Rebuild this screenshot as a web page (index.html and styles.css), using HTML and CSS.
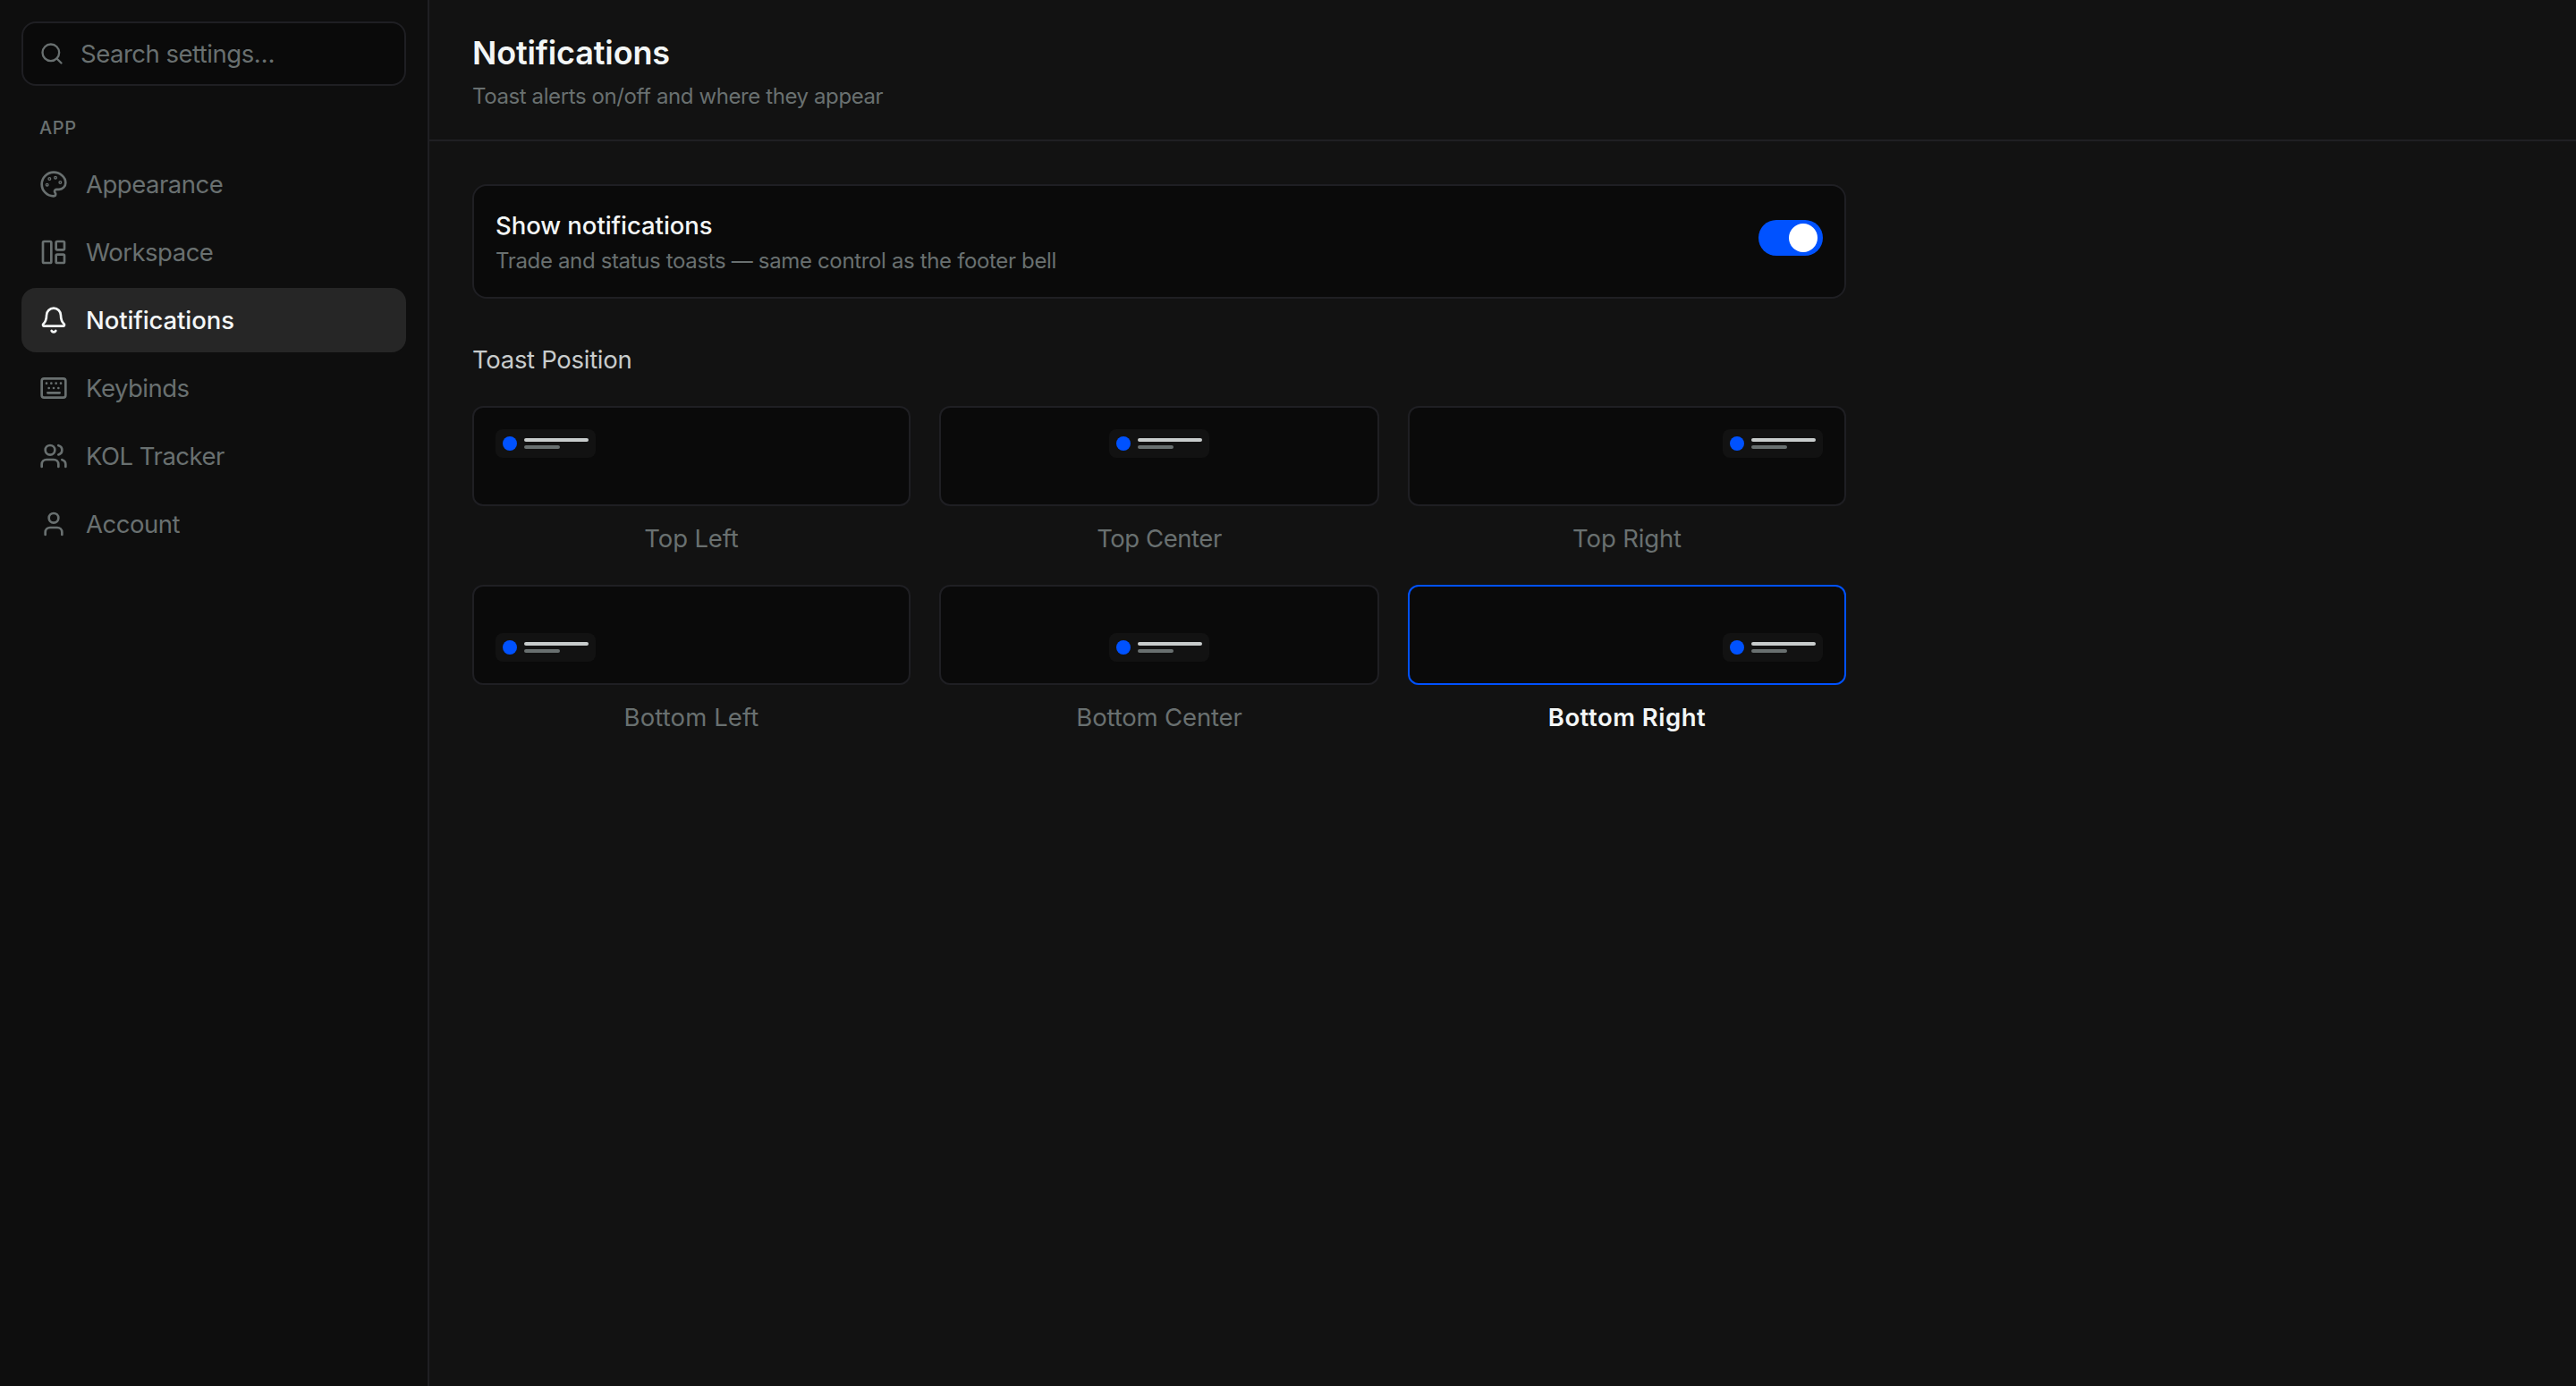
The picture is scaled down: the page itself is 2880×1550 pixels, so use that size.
FILE: index.html
```html
<!DOCTYPE html>
<html lang="en">
<head>
  <meta charset="UTF-8">
  <title>Settings - Notifications</title>
  <link rel="stylesheet" href="styles.css">
</head>
<body>
  <aside class="sidebar">
    <div class="search">
      <svg class="search-icon" viewBox="0 0 24 24"><circle cx="11" cy="11" r="8"/><path d="m21 21-4.3-4.3"/></svg>
      <span>Search settings…</span>
    </div>

    <div class="nav-label">APP</div>
    <nav class="nav">
      <a class="nav-item">
        <svg class="icon" viewBox="0 0 24 24"><circle cx="13.5" cy="6.5" r=".5"/><circle cx="17.5" cy="10.5" r=".5"/><circle cx="8.5" cy="7.5" r=".5"/><circle cx="6.5" cy="12.5" r=".5"/><path d="M12 2C6.5 2 2 6.5 2 12s4.5 10 10 10c.926 0 1.648-.746 1.648-1.688 0-.437-.18-.835-.437-1.125-.29-.289-.438-.652-.438-1.125a1.64 1.64 0 0 1 1.668-1.668h1.996c3.051 0 5.555-2.503 5.555-5.554C21.965 6.012 17.461 2 12 2z"/></svg>
        <span>Appearance</span>
      </a>
      <a class="nav-item">
        <svg class="icon" viewBox="0 0 24 24"><rect x="3" y="3" width="7" height="18" rx="1"/><rect x="14" y="3" width="7" height="7" rx="1"/><rect x="14" y="14" width="7" height="7" rx="1"/></svg>
        <span>Workspace</span>
      </a>
      <a class="nav-item active">
        <svg class="icon" viewBox="0 0 24 24"><path d="M10.268 21a2 2 0 0 0 3.464 0"/><path d="M3.262 15.326A1 1 0 0 0 4 17h16a1 1 0 0 0 .74-1.673C19.41 13.956 18 12.499 18 8A6 6 0 0 0 6 8c0 4.499-1.411 5.956-2.738 7.326"/></svg>
        <span>Notifications</span>
      </a>
      <a class="nav-item">
        <svg class="icon" viewBox="0 0 24 24"><path d="M6 8h.01M10 8h.01M14 8h.01M18 8h.01M8 12h.01M12 12h.01M16 12h.01M7 16h10"/><rect x="2" y="4" width="20" height="16" rx="2"/></svg>
        <span>Keybinds</span>
      </a>
      <a class="nav-item">
        <svg class="icon" viewBox="0 0 24 24"><path d="M16 21v-2a4 4 0 0 0-4-4H6a4 4 0 0 0-4 4v2"/><circle cx="9" cy="7" r="4"/><path d="M22 21v-2a4 4 0 0 0-3-3.87"/><path d="M16 3.13a4 4 0 0 1 0 7.75"/></svg>
        <span>KOL Tracker</span>
      </a>
      <a class="nav-item">
        <svg class="icon" viewBox="0 0 24 24"><circle cx="12" cy="7" r="4"/><path d="M19 21v-2a4 4 0 0 0-4-4H9a4 4 0 0 0-4 4v2"/></svg>
        <span>Account</span>
      </a>
    </nav>
  </aside>

  <main class="main">
    <header class="header">
      <h1 class="title">Notifications</h1>
      <p class="subtitle">Toast alerts on/off and where they appear</p>
    </header>

    <section class="content">
      <div class="card">
        <div>
          <div class="card-title">Show notifications</div>
          <div class="card-desc">Trade and status toasts — same control as the footer bell</div>
        </div>
        <div class="switch"><div class="knob"></div></div>
      </div>

      <h2 class="section-title">Toast Position</h2>
      <div class="positions">
        <div class="position">
          <div class="preview top left">
            <div class="toast"><i class="dot"></i><div class="lines"><i class="line"></i><i class="line short"></i></div></div>
          </div>
          <span class="position-label">Top Left</span>
        </div>
        <div class="position">
          <div class="preview top center">
            <div class="toast"><i class="dot"></i><div class="lines"><i class="line"></i><i class="line short"></i></div></div>
          </div>
          <span class="position-label tight">Top Center</span>
        </div>
        <div class="position">
          <div class="preview top right">
            <div class="toast"><i class="dot"></i><div class="lines"><i class="line"></i><i class="line short"></i></div></div>
          </div>
          <span class="position-label">Top Right</span>
        </div>
        <div class="position">
          <div class="preview bottom left">
            <div class="toast"><i class="dot"></i><div class="lines"><i class="line"></i><i class="line short"></i></div></div>
          </div>
          <span class="position-label wide">Bottom Left</span>
        </div>
        <div class="position">
          <div class="preview bottom center">
            <div class="toast"><i class="dot"></i><div class="lines"><i class="line"></i><i class="line short"></i></div></div>
          </div>
          <span class="position-label">Bottom Center</span>
        </div>
        <div class="position selected">
          <div class="preview bottom right">
            <div class="toast"><i class="dot"></i><div class="lines"><i class="line"></i><i class="line short"></i></div></div>
          </div>
          <span class="position-label">Bottom Right</span>
        </div>
      </div>
    </section>
  </main>
</body>
</html>
```
FILE: styles.css
```css
:root {
  --bg: #121212;
  --bg-sidebar: #0e0e0e;
  --bg-card: #0a0a0a;
  --bg-active: #262626;
  --border: #1f1f23;
  --text: #f3f6f6;
  --text-soft: #c8cccc;
  --text-muted: #697070;
  --primary: #0052ff;
}

* {
  margin: 0;
  padding: 0;
  box-sizing: border-box;
}

body {
  display: flex;
  height: 1550px;
  overflow: hidden;
  background: var(--bg);
  color: var(--text);
  font-family: Inter, "Liberation Sans", sans-serif;
  font-size: 27.5px;
  line-height: 40px;
}

.sidebar {
  width: 480px;
  flex-shrink: 0;
  padding: 24px;
  background: var(--bg-sidebar);
  border-right: 2px solid var(--border);
  color: var(--text-muted);
  letter-spacing: -0.5px;
}

.search {
  display: flex;
  align-items: center;
  gap: 18px;
  height: 72px;
  padding: 0 18px;
  background: var(--bg-card);
  border: 2px solid var(--border);
  border-radius: 16px;
}

.icon,
.search-icon {
  flex-shrink: 0;
  width: 32px;
  height: 32px;
  fill: none;
  stroke: currentColor;
  stroke-width: 2;
  stroke-linecap: round;
  stroke-linejoin: round;
}
.search-icon {
  width: 28px;
  height: 28px;
}

.nav-label {
  margin-top: 32px;
  padding-left: 20px;
  font-size: 20px;
  line-height: 30px;
  font-weight: 500;
  letter-spacing: 0.6px;
}

.nav {
  display: flex;
  flex-direction: column;
  gap: 4px;
  margin-top: 12px;
}

.nav-item {
  display: flex;
  align-items: center;
  gap: 20px;
  height: 72px;
  padding: 0 20px;
  border-radius: 16px;
}
.nav-item.active {
  background: var(--bg-active);
  color: var(--text);
  font-weight: 500;
  letter-spacing: -0.1px;
}

.main {
  flex: 1;
}

.header {
  height: 158px;
  padding: 34px 48px 0;
  border-bottom: 2px solid var(--border);
}
.title {
  font-size: 36px;
  line-height: 50px;
  font-weight: 600;
  letter-spacing: -0.15px;
}
.subtitle {
  margin-top: 7px;
  font-size: 24px;
  line-height: 33px;
  letter-spacing: -0.4px;
  color: var(--text-muted);
}

.content {
  width: 1632px;
  padding: 48px;
}

.card {
  display: flex;
  justify-content: space-between;
  height: 128px;
  padding: 24px 24px 0;
  background: var(--bg-card);
  border: 2px solid var(--border);
  border-radius: 16px;
}
.card-title {
  font-weight: 500;
  letter-spacing: -0.05px;
}
.card-desc {
  margin-top: 2px;
  font-size: 24px;
  line-height: 35px;
  letter-spacing: -0.35px;
  color: var(--text-muted);
}

.switch {
  display: flex;
  justify-content: flex-end;
  align-items: center;
  width: 72px;
  height: 40px;
  margin-top: 14px;
  padding: 0 6px;
  border-radius: 20px;
  background: var(--primary);
}
.knob {
  width: 32px;
  height: 32px;
  border-radius: 50%;
  background: #fff;
}

.section-title {
  margin-top: 48px;
  font-size: 27.5px;
  font-weight: 400;
  letter-spacing: -0.3px;
  color: var(--text-soft);
}

.positions {
  display: grid;
  grid-template-columns: 490px 492px 490px;
  gap: 32px;
  margin-top: 32px;
}
.position {
  display: flex;
  flex-direction: column;
  align-items: center;
  gap: 16px;
}
.preview {
  display: flex;
  align-self: stretch;
  height: 112px;
  padding: 24px;
  background: var(--bg-card);
  border: 2px solid var(--border);
  border-radius: 12px;
}
.preview.bottom {
  align-items: flex-end;
}
.preview.center {
  justify-content: center;
}
.preview.right {
  justify-content: flex-end;
}
.toast {
  display: flex;
  align-items: center;
  gap: 8px;
  width: 112px;
  height: 32px;
  padding: 0 8px;
  border-radius: 8px;
  background: var(--bg);
}
.dot {
  width: 16px;
  height: 16px;
  border-radius: 50%;
  background: var(--primary);
}
.lines {
  display: flex;
  flex-direction: column;
  gap: 4px;
}
.line {
  width: 72px;
  height: 4px;
  border-radius: 2px;
  background: var(--text-soft);
}
.line.short {
  width: 40px;
  background: var(--text-muted);
}

.position-label {
  letter-spacing: -0.15px;
  color: var(--text-muted);
}
.position-label.tight {
  letter-spacing: -0.45px;
}
.position-label.wide {
  letter-spacing: 0.1px;
}
.selected .preview {
  border-color: var(--primary);
}
.selected .position-label {
  color: var(--text);
  font-weight: 600;
  letter-spacing: 0.5px;
}
```
